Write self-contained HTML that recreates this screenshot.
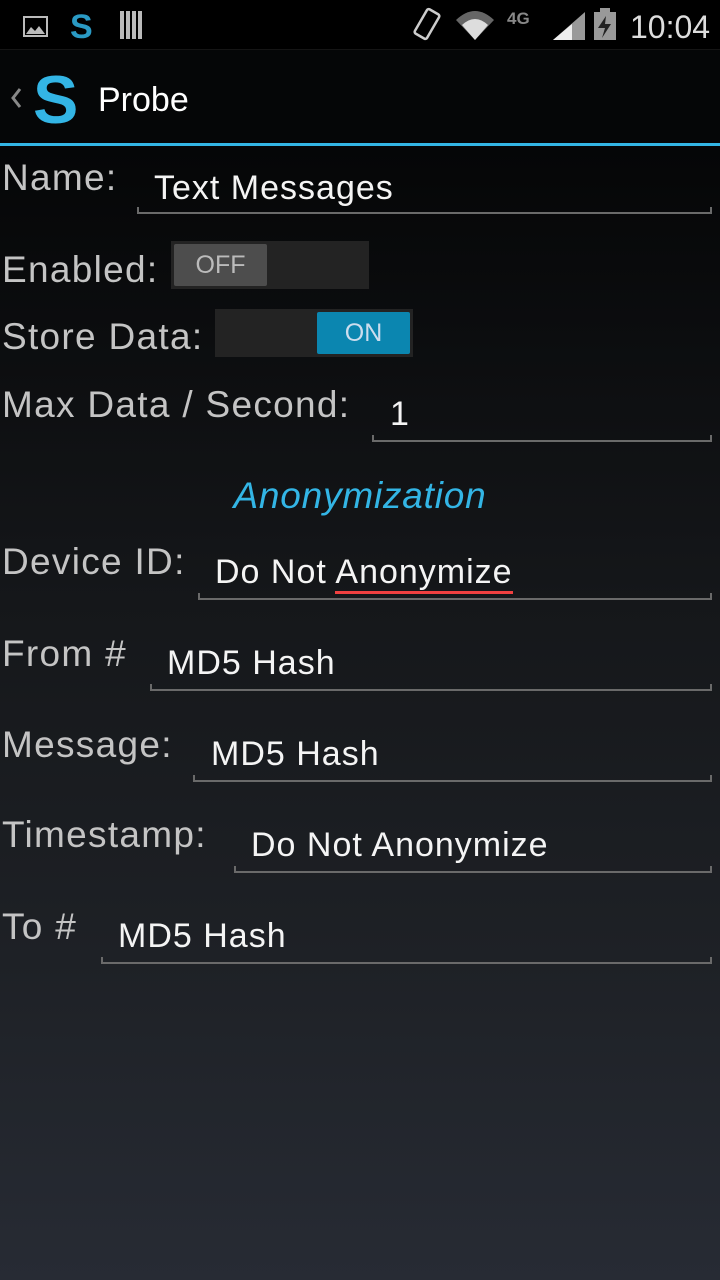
<!DOCTYPE html>
<html><head><meta charset="utf-8"><style>
*{margin:0;padding:0;box-sizing:border-box}
body{width:720px;height:1280px;overflow:hidden;font-family:"Liberation Sans",sans-serif;background:linear-gradient(#050607 0px,#050607 150px,#15171a 600px,#1e2126 960px,#272b34 1280px);position:relative}
.sb{position:absolute;top:0;left:0;width:720px;height:50px;background:#000;border-bottom:1px solid #151515}
.ab{position:absolute;top:51px;left:0;width:720px;height:92px;background:#050607}
.bl{position:absolute;top:143px;left:0;width:720px;height:3px;background:#33b5e5}
.t{position:absolute;white-space:nowrap;line-height:1}
.lab{color:#c4c4c4;font-size:37px;letter-spacing:1.3px}
.val{color:#f4f4f4;font-size:34px;letter-spacing:1px}
.ul{position:absolute;height:7px;border:2px solid #6a6a6a;border-top:none}
.tg{position:absolute;background:#232323;height:48px;width:198px}
.th{position:absolute;top:3px;height:42px;width:93px;border-radius:2px;text-align:center;line-height:42px;font-size:25px}
</style></head><body>
<div class="sb">
<svg width="720" height="50" style="position:absolute;left:0;top:0">
<rect x="24" y="17" width="23" height="19" fill="none" stroke="#bbb" stroke-width="2"/>
<path d="M26 34 L31 27 L35 31 L39 26 L45 34Z" fill="#bbb"/>
<text x="70" y="38" font-family="Liberation Sans" font-weight="bold" font-size="34" fill="#2a9ac4">S</text>
<g fill="#bbb"><rect x="120" y="11" width="4" height="28"/><rect x="126" y="11" width="4" height="28"/><rect x="132" y="11" width="4" height="28"/><rect x="138" y="11" width="4" height="28"/></g>
<g transform="rotate(30 427 24)"><rect x="420" y="10" width="14" height="28" rx="2" fill="none" stroke="#ccc" stroke-width="2.5"/></g>
<path d="M456 20 Q475 2 494 20 L475 40Z" fill="#666"/>
<path d="M462 25 Q475 13 488 25 L475 40Z" fill="#ddd"/>
<text x="507" y="24" font-family="Liberation Sans" font-weight="bold" font-size="17" fill="#888">4G</text>
<path d="M553 40 L585 12 L585 40Z" fill="#999"/>
<path d="M553 40 L572 24 L572 40Z" fill="#eee"/>
<rect x="594" y="12" width="22" height="28" fill="#999"/><rect x="600" y="8" width="10" height="5" fill="#999"/>
<path d="M606 16 L598 28 L605 28 L602 38 L611 24 L605 24Z" fill="#222"/>
<text x="630" y="38" font-family="Liberation Sans" font-size="32" fill="#ddd">10:04</text>
</svg>
</div>
<div class="ab">
<svg width="220" height="92" style="position:absolute;left:0;top:0">
<path d="M20 38 L13 47 L20 56" fill="none" stroke="#888" stroke-width="3"/>
<text x="33" y="72" font-family="Liberation Sans" font-weight="bold" font-size="68" fill="#33b5e5">S</text>
</svg>
<div class="t" style="left:98px;top:32px;color:#fff;font-size:34px">Probe</div>
</div>
<div class="bl"></div>

<div class="t lab" style="left:2px;top:159px">Name:</div>
<div class="t val" style="left:154px;top:171px">Text Messages</div>
<div class="ul" style="left:137px;top:207px;width:575px"></div>

<div class="t lab" style="left:2px;top:251px">Enabled:</div>
<div class="tg" style="left:171px;top:241px"><div class="th" style="left:3px;background:#4d4d4d;color:#bbb">OFF</div></div>

<div class="t lab" style="left:2px;top:318px">Store Data:</div>
<div class="tg" style="left:215px;top:309px"><div class="th" style="left:102px;background:#0b86b0;color:#cde">ON</div></div>

<div class="t lab" style="left:2px;top:386px">Max Data / Second:</div>
<div class="t val" style="left:390px;top:397px">1</div>
<div class="ul" style="left:372px;top:435px;width:340px"></div>

<div class="t" style="left:0;width:720px;text-align:center;top:477px;color:#33b5e5;font-size:37px;font-style:italic;letter-spacing:0.8px">Anonymization</div>

<div class="t lab" style="left:2px;top:543px">Device ID:</div>
<div class="t val" style="left:215px;top:555px">Do Not <span style="border-bottom:3px solid #f04040">Anonymize</span></div>
<div class="ul" style="left:198px;top:593px;width:514px"></div>

<div class="t lab" style="left:2px;top:635px">From #</div>
<div class="t val" style="left:167px;top:646px">MD5 Hash</div>
<div class="ul" style="left:150px;top:684px;width:562px"></div>

<div class="t lab" style="left:2px;top:726px">Message:</div>
<div class="t val" style="left:211px;top:737px">MD5 Hash</div>
<div class="ul" style="left:193px;top:775px;width:519px"></div>

<div class="t lab" style="left:2px;top:816px">Timestamp:</div>
<div class="t val" style="left:251px;top:828px">Do Not Anonymize</div>
<div class="ul" style="left:234px;top:866px;width:478px"></div>

<div class="t lab" style="left:2px;top:908px">To #</div>
<div class="t val" style="left:118px;top:919px">MD5 Hash</div>
<div class="ul" style="left:101px;top:957px;width:611px"></div>
</body></html>
